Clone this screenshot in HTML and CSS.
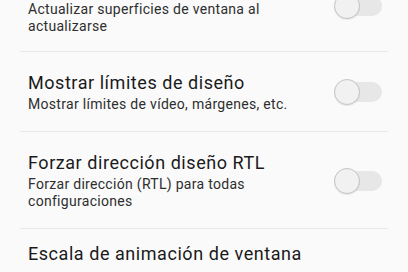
FILE: index.html
```html
<!DOCTYPE html>
<html lang="es">
<head>
  <meta charset="UTF-8">
  <meta name="viewport" content="width=device-width, initial-scale=1.0">
  <title>Opciones de desarrollador</title>
  <link rel="stylesheet" href="styles.css">
</head>
<body>
  <div class="list">
    <div class="row first">
      <div class="text">
        <div class="title">Mostrar actualizaciones</div>
        <div class="summary">Actualizar superficies de ventana al actualizarse</div>
      </div>
      <div class="switch"><span class="thumb"></span></div>
    </div>
    <div class="row">
      <div class="text">
        <div class="title">Mostrar límites de diseño</div>
        <div class="summary">Mostrar límites de vídeo, márgenes, etc.</div>
      </div>
      <div class="switch"><span class="thumb"></span></div>
    </div>
    <div class="row">
      <div class="text">
        <div class="title">Forzar dirección diseño RTL</div>
        <div class="summary">Forzar dirección (RTL) para todas configuraciones</div>
      </div>
      <div class="switch"><span class="thumb"></span></div>
    </div>
    <div class="row last">
      <div class="text">
        <div class="title">Escala de animación de ventana</div>
      </div>
    </div>
  </div>
</body>
</html>
```

FILE: styles.css
```css
html, body {
  margin: 0;
  height: 100%;
  overflow: hidden;
}
body {
  background: #fafafa;
  font-family: Roboto, 'Noto Sans', sans-serif;
  color: #1f1f1f;
}
.list {
  margin-top: -43px;
}
.row {
  display: flex;
  align-items: center;
  margin: 0 20px;
  padding: 19px 6px 18px 8px;
  border-bottom: 1px solid #e8e8e8;
}
.row.first {
  padding-bottom: 16px;
}
.row.last {
  padding-top: 13px;
  border-bottom: none;
}
.text {
  flex: 1;
  margin-right: 30px;
}
.title {
  font-size: 18px;
  line-height: 24px;
  letter-spacing: 0.55px;
  color: #1a1a1a;
}
.summary {
  margin-top: 1px;
  font-size: 14px;
  line-height: 17px;
  letter-spacing: 0.3px;
  color: #2e2e2e;
}
.switch {
  position: relative;
  width: 45px;
  height: 20px;
  border-radius: 10px;
  background: #e7e7e7;
}
.thumb {
  position: absolute;
  left: -3px;
  top: -3px;
  width: 24px;
  height: 24px;
  border-radius: 50%;
  background: #f1f1f1;
  border: 1px solid #c4c4c4;
  box-shadow: 0 1px 1px rgba(0, 0, 0, 0.08);
}
```
